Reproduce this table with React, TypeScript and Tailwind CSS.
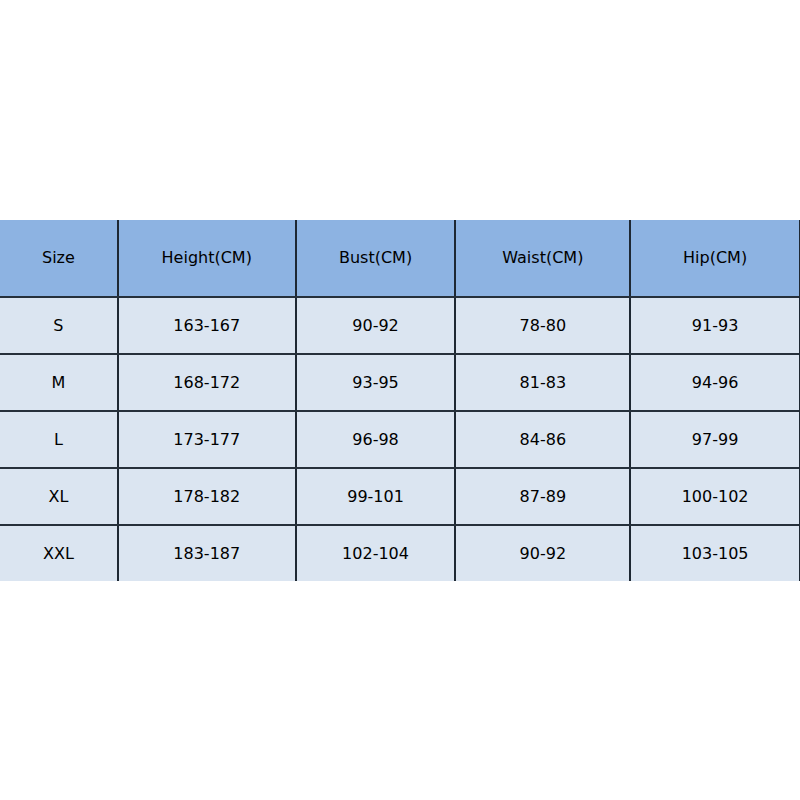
import React from "react";

const headers = ["Size", "Height(CM)", "Bust(CM)", "Waist(CM)", "Hip(CM)"];
const rows = [
  ["S", "163-167", "90-92", "78-80", "91-93"],
  ["M", "168-172", "93-95", "81-83", "94-96"],
  ["L", "173-177", "96-98", "84-86", "97-99"],
  ["XL", "178-182", "99-101", "87-89", "100-102"],
  ["XXL", "183-187", "102-104", "90-92", "103-105"],
];

const cols = ["w-[117px]", "w-[178px]", "w-[160px]", "w-[175px]", "w-[170px]"];

export default function App() {
  return (
    <div className="w-[800px] h-[800px] bg-white pt-[220px]" style={{ fontFamily: '"DejaVu Sans", sans-serif' }}>
      <div className="w-[800px] flex flex-col border-r border-[#1e2833]">
        <div className="flex h-[76px] bg-[#8db3e2]">
          {headers.map((h, i) => (
            <div
              key={h}
              className={`${cols[i]} flex items-center justify-center text-[16px] text-black ${i > 0 ? "border-l-2 border-[#1e2833]" : ""}`}
            >
              {h}
            </div>
          ))}
        </div>
        {rows.map((r, ri) => (
          <div key={ri} className="flex h-[57px] bg-[#dbe5f1] border-t-2 border-[#26303b]">
            {r.map((c, i) => (
              <div
                key={i}
                className={`${cols[i]} flex items-center justify-center text-[16px] text-black ${i > 0 ? "border-l-2 border-[#1e2833]" : ""}`}
              >
                {c}
              </div>
            ))}
          </div>
        ))}
      </div>
    </div>
  );
}
